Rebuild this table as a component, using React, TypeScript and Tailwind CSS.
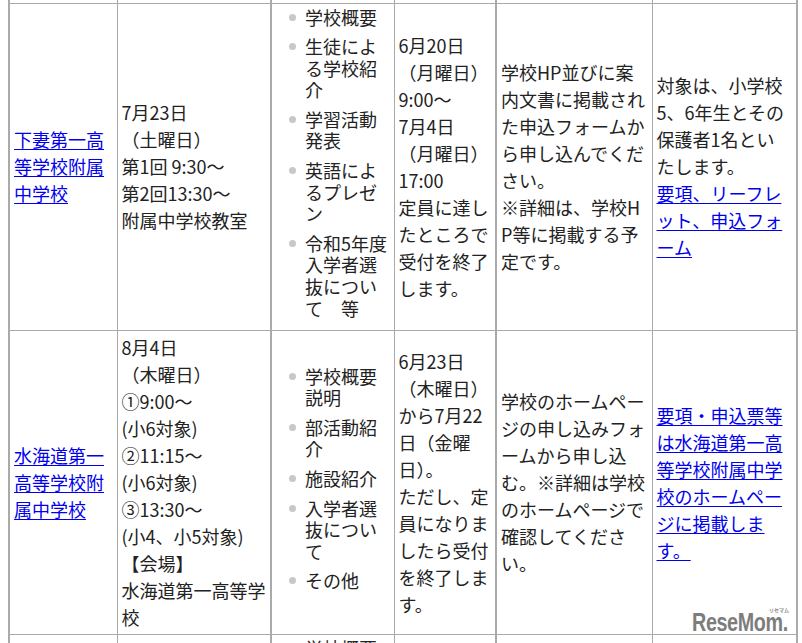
import React from "react";

const Lines = ({ lines }: { lines: string[] }) => (
  <>
    {lines.map((l, i) => (
      <React.Fragment key={i}>
        {i > 0 && <br />}
        {l}
      </React.Fragment>
    ))}
  </>
);

const Link = ({ lines }: { lines: string[] }) => (
  <a href="#" className="text-[#0000ee] underline underline-offset-2">
    <Lines lines={lines} />
  </a>
);

const Bullets = ({ items }: { items: string[][] }) => (
  <ul className="leading-[21.6px]">
    {items.map((it, i) => (
      <li key={i} className="flex items-start mb-[8px]">
        <span className="mt-[7px] ml-[13px] w-[7px] h-[7px] rounded-full bg-[#c8c8c8] shrink-0" />
        <span className="ml-[9px] whitespace-nowrap">
          <Lines lines={it} />
        </span>
      </li>
    ))}
  </ul>
);

const td = "border border-[#aaaaaa] px-1 py-[3px] align-middle whitespace-nowrap";

export default function App() {
  return (
    <div
      className="relative h-[643px] w-[802px] overflow-hidden bg-white pl-2 text-[18px] leading-[27px] text-[#222]"
      style={{ fontFamily: '"Noto Sans CJK JP", "Noto Sans", sans-serif' }}
    >
      <table className="table-fixed border-collapse w-[788px]">
        <colgroup>
          <col className="w-[108px]" />
          <col className="w-[154px]" />
          <col className="w-[123px]" />
          <col className="w-[102px]" />
          <col className="w-[156px]" />
          <col className="w-[145px]" />
        </colgroup>
        <tbody>
          <tr>
            <td className="border border-t-0 border-l-2 border-[#aaaaaa] p-0 h-[3px]" />
            <td className="border border-t-0 border-[#aaaaaa] p-0 h-[3px]" />
            <td className="border border-t-0 border-l-2 border-[#aaaaaa] p-0 h-[3px]" />
            <td className="border border-t-0 border-[#aaaaaa] p-0 h-[3px]" />
            <td className="border border-t-0 border-l-2 border-[#aaaaaa] p-0 h-[3px]" />
            <td className="border border-t-0 border-r-2 border-[#aaaaaa] p-0 h-[3px]" />
          </tr>
          <tr>
            <td className={`${td} border-l-2`}>
              <Link lines={["下妻第一高", "等学校附属", "中学校"]} />
            </td>
            <td className={td}>
              <Lines lines={["7月23日", "（土曜日）", "第1回 9:30～", "第2回13:30～", "附属中学校教室"]} />
            </td>
            <td className={`${td} border-l-2`}>
              <Bullets
                items={[
                  ["学校概要"],
                  ["生徒によ", "る学校紹", "介"],
                  ["学習活動", "発表"],
                  ["英語によ", "るプレゼ", "ン"],
                  ["令和5年度", "入学者選", "抜につい", "て　等"],
                ]}
              />
            </td>
            <td className={td}>
              <Lines
                lines={["6月20日", "（月曜日）", "9:00～", "7月4日", "（月曜日）", "17:00", "定員に達し", "たところで", "受付を終了", "します。"]}
              />
            </td>
            <td className={`${td} border-l-2`}>
              <Lines
                lines={["学校HP並びに案", "内文書に掲載され", "た申込フォームか", "ら申し込んでくだ", "さい。", "※詳細は、学校H", "P等に掲載する予", "定です。"]}
              />
            </td>
            <td className={`${td} border-r-2`}>
              <Lines lines={["対象は、小学校", "5、6年生とその", "保護者1名とい", "たします。"]} />
              <br />
              <Link lines={["要項、リーフレ", "ット、申込フォ", "ーム"]} />
            </td>
          </tr>
          <tr>
            <td className={`${td} border-l-2`}>
              <Link lines={["水海道第一", "高等学校附", "属中学校"]} />
            </td>
            <td className={td}>
              <Lines
                lines={["8月4日", "（木曜日）", "①9:00～", "(小6対象)", "②11:15～", "(小6対象)", "③13:30～", "(小4、小5対象)", "【会場】", "水海道第一高等学", "校"]}
              />
            </td>
            <td className={`${td} border-l-2`}>
              <Bullets
                items={[["学校概要", "説明"], ["部活動紹", "介"], ["施設紹介"], ["入学者選", "抜につい", "て"], ["その他"]]}
              />
            </td>
            <td className={td}>
              <Lines
                lines={["6月23日", "（木曜日）", "から7月22", "日（金曜", "日）。", "ただし、定", "員になりま", "したら受付", "を終了しま", "す。"]}
              />
            </td>
            <td className={`${td} border-l-2`}>
              <Lines
                lines={["学校のホームペー", "ジの申し込みフォ", "ームから申し込", "む。※詳細は学校", "のホームページで", "確認してくださ", "い。"]}
              />
            </td>
            <td className={`${td} border-r-2`}>
              <Link lines={["要項・申込票等", "は水海道第一高", "等学校附属中学", "校のホームペー", "ジに掲載しま", "す。"]} />
            </td>
          </tr>
          <tr>
            <td className={`${td} border-l-2`} />
            <td className={td} />
            <td className={`${td} border-l-2 align-top`}>
              <Bullets items={[["学校概要"]]} />
            </td>
            <td className={td} />
            <td className={`${td} border-l-2`} />
            <td className={`${td} border-r-2`} />
          </tr>
        </tbody>
      </table>

      <div className="absolute left-[690px] top-[603px] w-[104px] h-[36px] pointer-events-none">
        <span
          className="absolute left-[79px] top-[4px] text-[5px] leading-[6px] font-bold text-[#8a8a8a] whitespace-nowrap"
          style={{ fontFamily: '"Noto Sans CJK JP", sans-serif' }}
        >
          リセマム
        </span>
        <span
          className="absolute left-[2px] top-[3px] origin-left scale-x-[0.76] text-[26px] leading-[32px] font-bold tracking-[-0.5px] text-[#7d7d7d] whitespace-nowrap"
          style={{ fontFamily: '"Liberation Sans", Arial, sans-serif' }}
        >
          ReseMom.
        </span>
      </div>
    </div>
  );
}
